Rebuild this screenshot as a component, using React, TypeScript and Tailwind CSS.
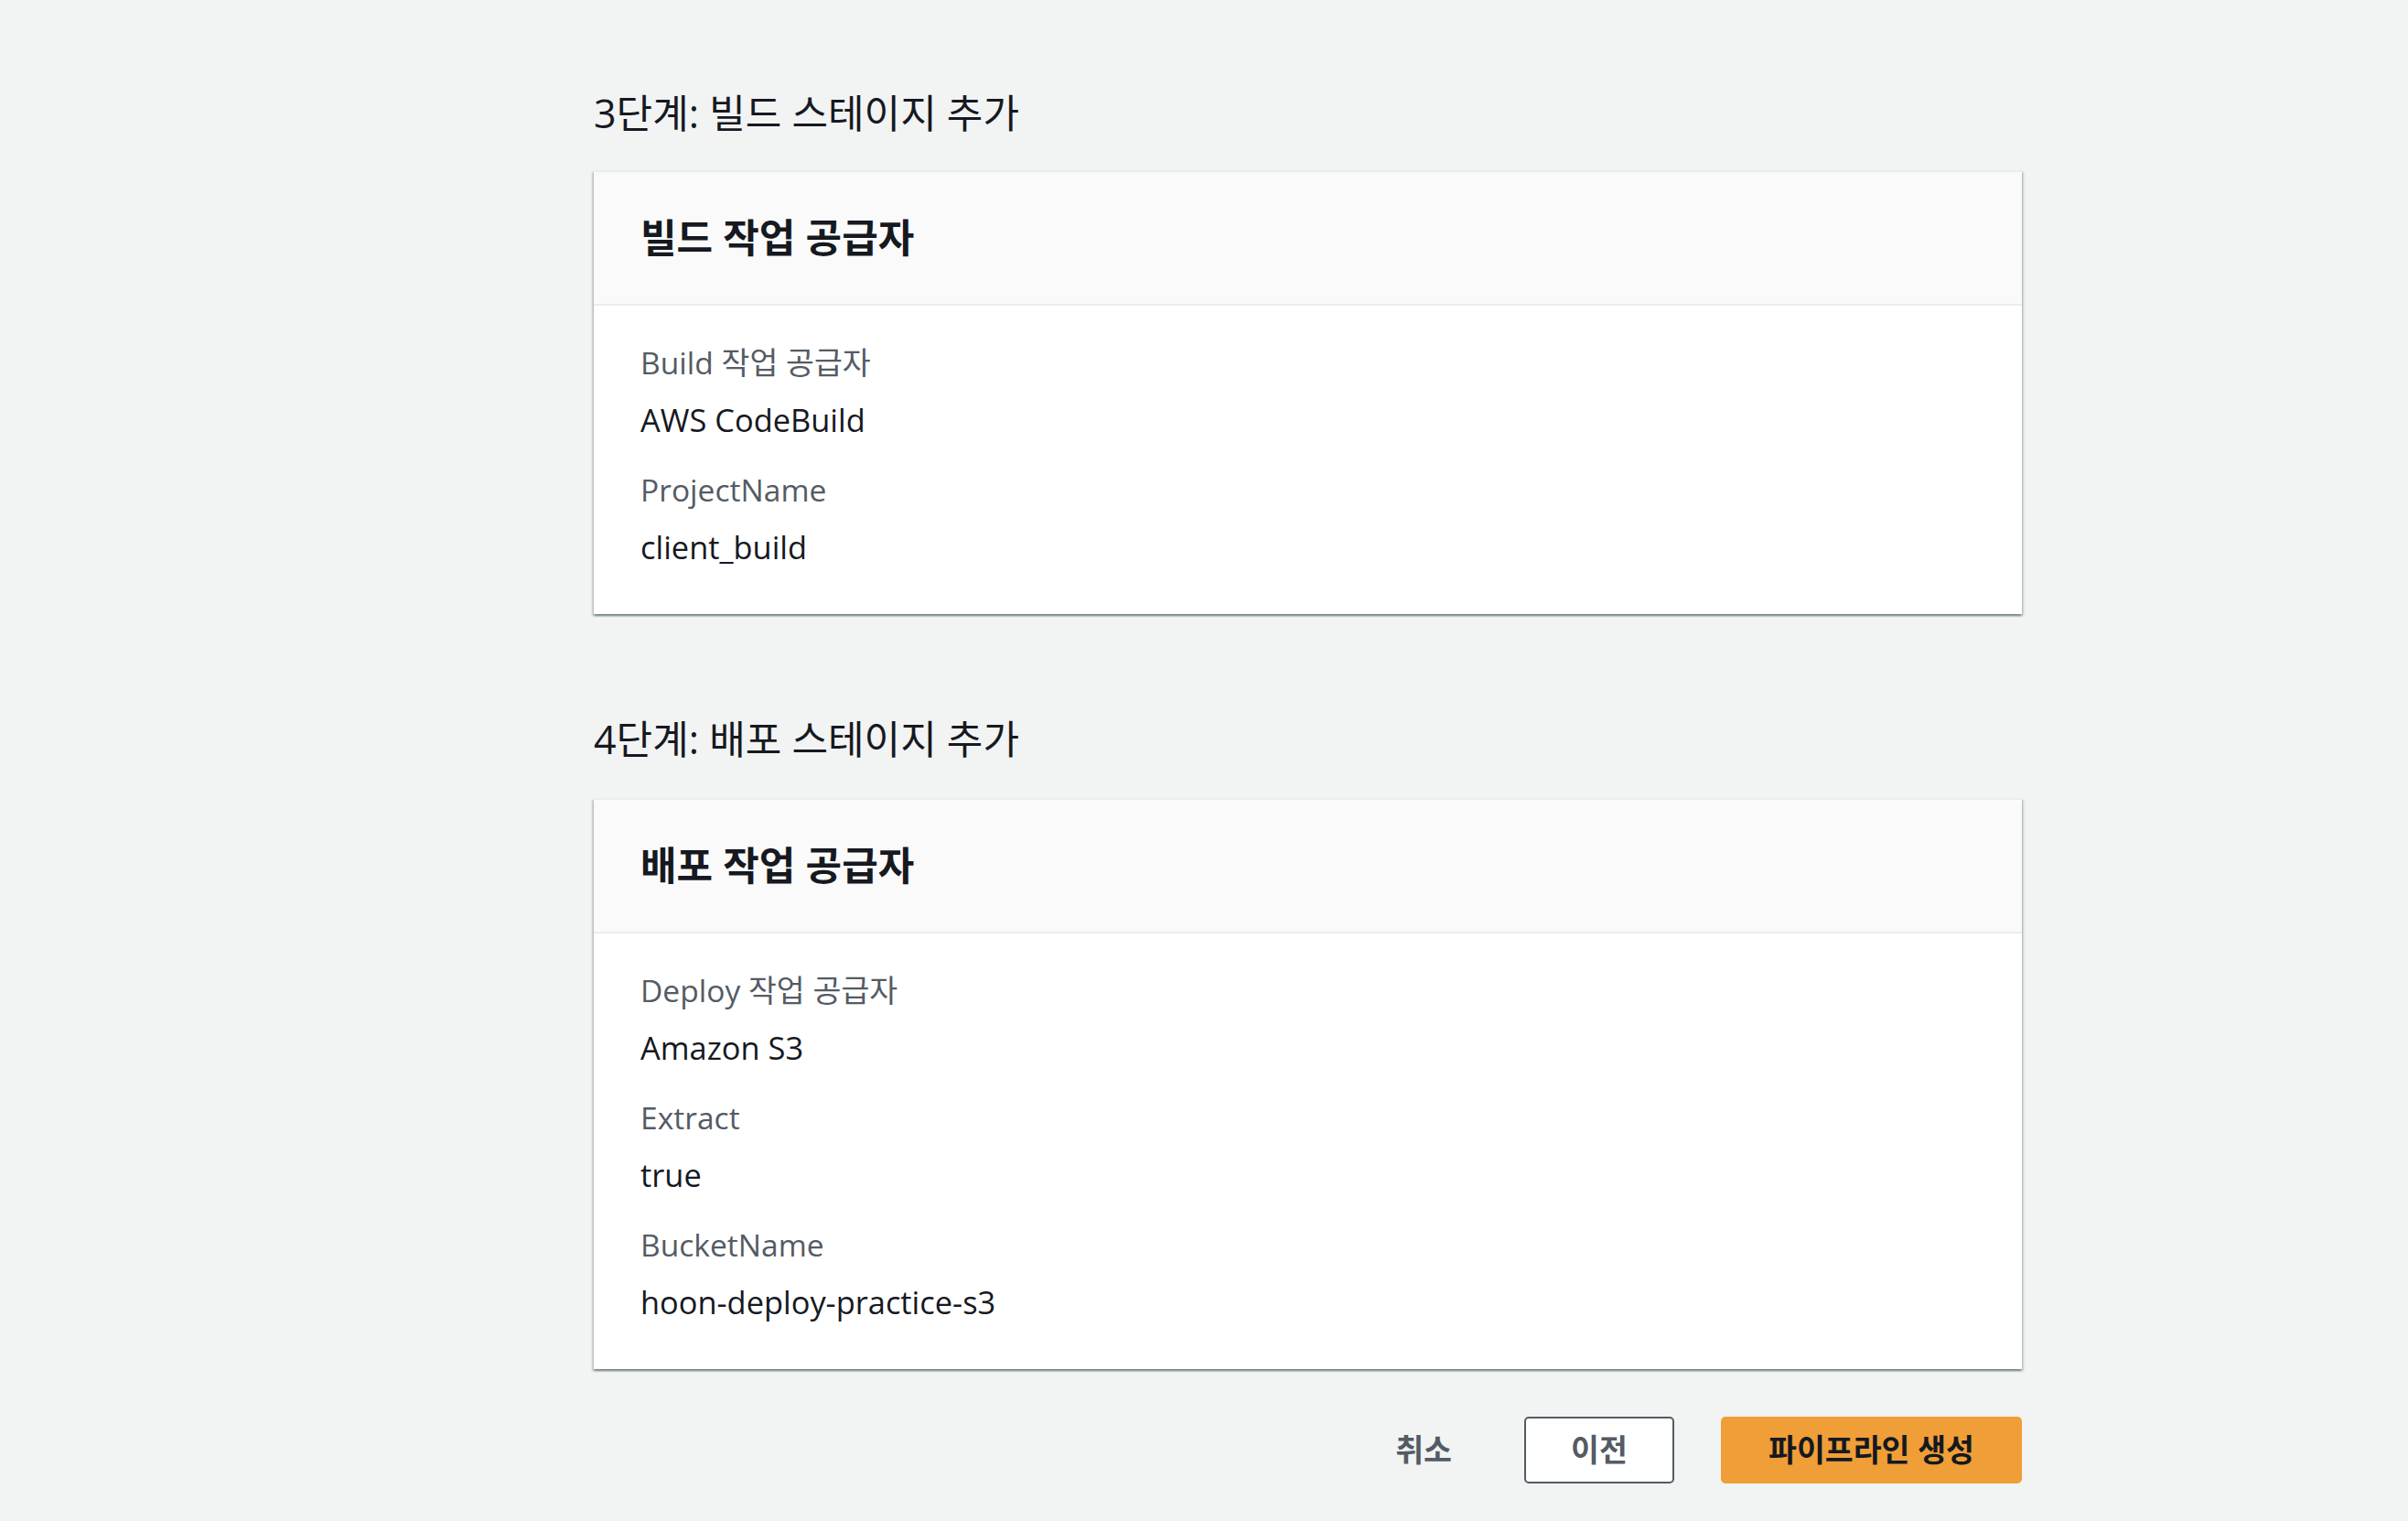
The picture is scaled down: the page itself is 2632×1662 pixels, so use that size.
type Field = {
  label: string;
  value: string;
};

type StageCardProps = {
  title: string;
  fields: Field[];
};

const buildFields: Field[] = [
  { label: 'Build 작업 공급자', value: 'AWS CodeBuild' },
  { label: 'ProjectName', value: 'client_build' },
];

const deployFields: Field[] = [
  { label: 'Deploy 작업 공급자', value: 'Amazon S3' },
  { label: 'Extract', value: 'true' },
  { label: 'BucketName', value: 'hoon-deploy-practice-s3' },
];

const StageCard = ({ title, fields }: StageCardProps) => {
  return (
    <div className="bg-white border-t-2 border-[#eaeded] shadow-[0_2px_2px_0_rgba(0,28,36,0.35),2px_2px_2px_0_rgba(0,28,36,0.15),-2px_2px_2px_0_rgba(0,28,36,0.15)]">
      <div className="bg-[#fafafa] border-b-2 border-[#eaeded] px-[51px] pt-[42px] pb-[42px]">
        <h2 className="text-[43px] leading-[60px] font-bold text-[#16191f]">{title}</h2>
      </div>
      <div className="px-[51px] pt-[38px] pb-[49px] flex flex-col gap-[28px]">
        {fields.map((f) => (
          <div key={f.label} className="flex flex-col gap-[15px]">
            <div className="text-[33.6px] leading-[48px] text-[#545b64]">{f.label}</div>
            <div className="text-[34.4px] leading-[48px] text-[#16191f]">{f.value}</div>
          </div>
        ))}
      </div>
    </div>
  );
};

export default function App() {
  return (
    <div className="min-h-screen bg-[#f2f3f3] font-['Open_Sans','Noto_Sans_CJK_KR',sans-serif]">
      <div className="ml-[649px] w-[1561px] pt-[98px] pb-[43px]">
        <h1 className="text-[43px] leading-[52px] text-[#16191f]">3단계: 빌드 스테이지 추가</h1>
        <div className="mt-[36px]">
          <StageCard title="빌드 작업 공급자" fields={buildFields} />
        </div>

        <h1 className="mt-[111px] text-[43px] leading-[52px] text-[#16191f]">4단계: 배포 스테이지 추가</h1>
        <div className="mt-[38px]">
          <StageCard title="배포 작업 공급자" fields={deployFields} />
        </div>

        <div className="mt-[52px] flex items-center justify-end h-[73px]">
          <button className="text-[33.6px] font-bold text-[#545b64] mr-[79px]">취소</button>
          <button className="w-[164px] h-[73px] rounded-[5px] border-2 border-[#545b64] bg-white text-[33.6px] font-bold text-[#545b64]">
            이전
          </button>
          <button className="ml-[51px] w-[329px] h-[73px] rounded-[5px] bg-[#f09e38] text-[33.6px] font-bold text-[#16191f]">
            파이프라인 생성
          </button>
        </div>
      </div>
    </div>
  );
}
